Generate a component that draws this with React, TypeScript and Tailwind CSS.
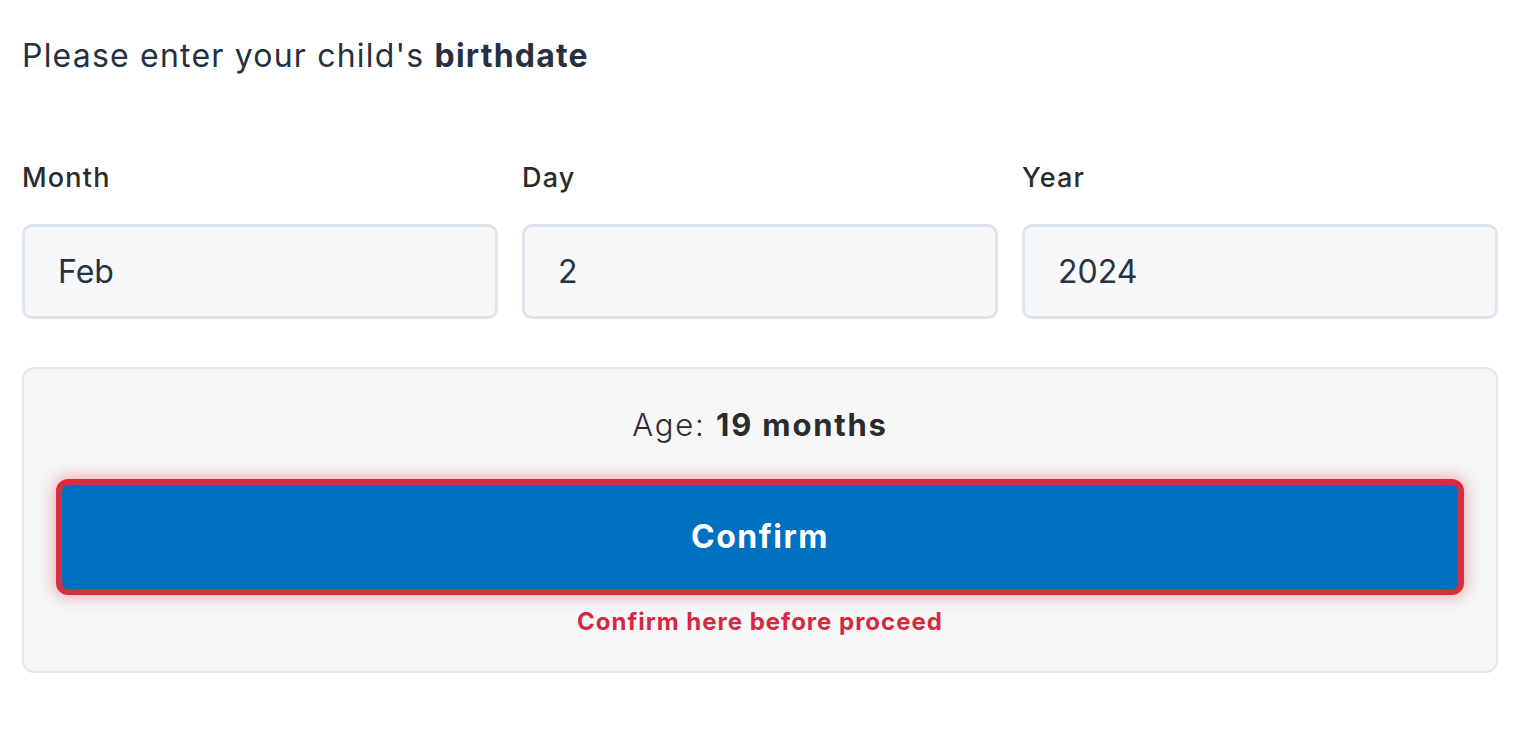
import React from "react";

const fields = [
  { label: "Month", value: "Feb" },
  { label: "Day", value: "2" },
  { label: "Year", value: "2024" },
];

function BirthdateForm() {
  return (
    <div
      className="min-h-screen bg-white px-[22px] pt-[33px]"
      style={{ fontFamily: "Inter, 'Noto Sans', sans-serif" }}
    >
      <h1 className="text-[32px] leading-[45px] font-normal text-[#263040] tracking-[1.2px]">
        Please enter your child's <span className="font-bold">birthdate</span>
      </h1>

      <div className="mt-[80px] grid grid-cols-3 gap-[24px]">
        {fields.map((f) => (
          <div key={f.label}>
            <label className="block text-[27px] leading-[40px] font-medium text-[#2b2b2b] tracking-[1.2px]">
              {f.label}
            </label>
            <div className="mt-[26px] flex h-[95px] items-center rounded-[10px] border-[3px] border-[#dee5ed] bg-[#f7f8fa] px-[33px] text-[32px] text-[#283242]">
              {f.value}
            </div>
          </div>
        ))}
      </div>

      <div className="mt-[48px] rounded-[12px] border-2 border-[#e6e8eb] bg-[#f6f7f9] px-8 pt-[33px] pb-[31px]">
        <p className="text-center text-[31px] leading-[45px] text-[#2b2b2b] tracking-[1.8px]">
          <span className="font-light">Age: </span>
          <span className="font-bold">19 months</span>
        </p>
        <button className="mt-[32px] flex h-[116px] w-full items-center justify-center rounded-[12px] border-[6px] border-[#d62d3f] bg-[#0070c0] text-[32px] font-bold text-white tracking-[1.5px] shadow-[0_0_14px_4px_rgba(214,45,63,0.3)]">
          Confirm
        </button>
        <p className="mt-[9px] text-center text-[24px] leading-[36px] font-bold text-[#d7283e] tracking-[1px]">
          Confirm here before proceed
        </p>
      </div>
    </div>
  );
}

export default function App() {
  return <BirthdateForm />;
}
